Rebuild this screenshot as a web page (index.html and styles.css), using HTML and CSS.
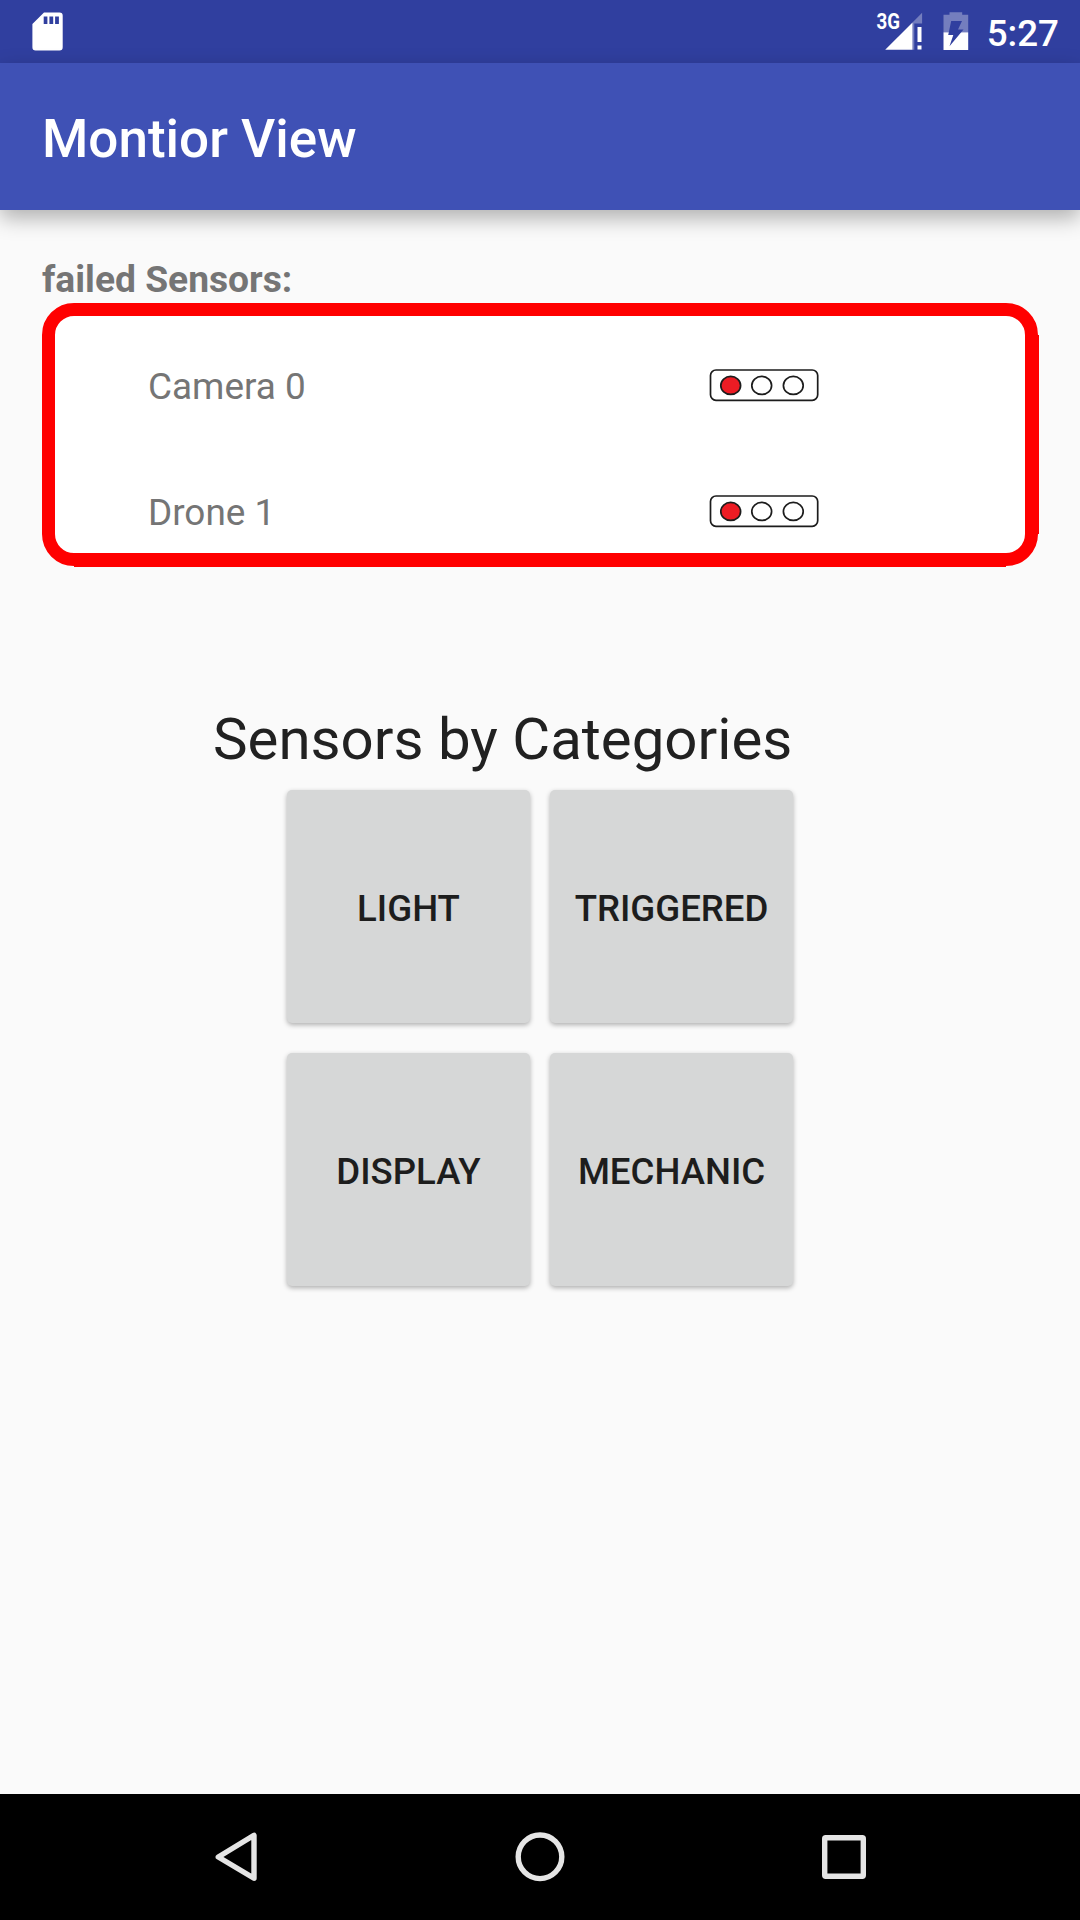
FILE: index.html
```html
<!DOCTYPE html>
<html lang="en">
<head>
<meta charset="utf-8">
<title>Montior View</title>
<link rel="stylesheet" href="styles.css">
</head>
<body>
<div class="screen">
  <div class="status-bar">
    <svg class="sd-icon" width="32" height="40" viewBox="32 12 32 40">
      <path fill="#fff" fill-rule="evenodd" d="M44 12.4H59.5Q62.7 12.4 62.7 15.6V47.3Q62.7 50.6 59.5 50.6H35.600Q32.400 50.600 32.400 47.300V24ZM43.700 16.400V24H47.400V16.400ZM49.400 16.400V24H53.200V16.400ZM55.100 16.400V24H58.900V16.400Z"/>
    </svg>
    <div class="status-right">
      <svg class="status-icons" width="96" height="63" viewBox="874.500 0 96 63">
        <text class="net-label" x="876" y="29" textLength="23.500" lengthAdjust="spacingAndGlyphs">3G</text>
        <path fill="#fff" d="M884.700 49.800L912 22.500V49.800Z"/>
        <path fill="#fff" fill-opacity=".33" d="M912 22.500L921.600 12.800V23.500H913.800V49.800H912Z"/>
        <path fill="#fff" d="M917 27H921V42H917ZM917 45.500H921V49.500H917Z"/>
        <path fill="#fff" fill-opacity=".33" d="M943 32.300V14.800H949V12.200H961.700V14.800H967.700V32.300Z"/>
        <path fill="#fff" d="M943 32.300H967.700V50H943Z"/>
        <path fill="#303f9f" d="M950.700 21H961.500L957.500 29.500H963L949 46.300L952.800 35H947.700Z"/>
      </svg>
      <span class="clock">5:27</span>
    </div>
  </div>
  <header class="app-bar">Montior View</header>
  <main class="content">
    <h2 class="failed-title">failed Sensors:</h2>
    <div class="failed-frame">
      <div class="failed-list">
        <div class="sensor-row">
          <span>Camera 0</span>
          <svg class="lamp" width="110" height="44" viewBox="0 0 110 44"><rect x="1.500" y="6" width="107.200" height="30.300" rx="5.500"/><ellipse class="on" cx="21.700" cy="21.400" rx="9.900" ry="9"/><ellipse cx="52.700" cy="21.400" rx="9.900" ry="9"/><ellipse cx="84.300" cy="21.400" rx="9.900" ry="9"/></svg>
        </div>
        <div class="sensor-row">
          <span>Drone 1</span>
          <svg class="lamp" width="110" height="44" viewBox="0 0 110 44"><rect x="1.500" y="6" width="107.200" height="30.300" rx="5.500"/><ellipse class="on" cx="21.700" cy="21.400" rx="9.900" ry="9"/><ellipse cx="52.700" cy="21.400" rx="9.900" ry="9"/><ellipse cx="84.300" cy="21.400" rx="9.900" ry="9"/></svg>
        </div>
      </div>
    </div>
    <h1 class="category-title">Sensors by Categories</h1>
    <div class="category-grid">
      <button class="category">LIGHT</button>
      <button class="category">TRIGGERED</button>
      <button class="category">DISPLAY</button>
      <button class="category">MECHANIC</button>
    </div>
  </main>
  <nav class="nav-bar">
    <svg width="56" height="56" viewBox="208 1829 56 56"><path d="M254 1835.300V1878.300L218.300 1857Z"/></svg>
    <svg width="56" height="56" viewBox="512 1829 56 56"><circle cx="540" cy="1856.800" r="21.800"/></svg>
    <svg width="56" height="56" viewBox="816 1829 56 56"><rect x="824.700" y="1837.700" width="38.600" height="38.600" rx="1"/></svg>
  </nav>
</div>
</body>
</html>
```
FILE: styles.css
```css
* {
  box-sizing: border-box;
}

body {
  margin: 0;
  font-family: Roboto, sans-serif;
}

.screen {
  display: flex;
  flex-direction: column;
  width: 1080px;
  height: 1920px;
  overflow: hidden;
  background: #fafafa;
}

.status-bar {
  display: flex;
  justify-content: space-between;
  height: 63px;
  padding: 0 21px 0 32px;
  background: #303f9f;
}

.sd-icon {
  margin-top: 12px;
}

.status-right {
  display: flex;
  gap: 16px;
}

.net-label {
  fill: #fff;
  font-size: 21.500px;
  font-weight: 700;
}

.clock {
  color: #fff;
  font-size: 36.750px;
  font-weight: 500;
  line-height: 68px;
}

.app-bar {
  height: 147px;
  padding-left: 42px;
  background: #3f51b5;
  box-shadow: 0 8px 20px rgba(0, 0, 0, .3);
  color: #fff;
  font-size: 53px;
  font-weight: 500;
  line-height: 153px;
}

.content {
  display: flex;
  flex: 1;
  flex-direction: column;
  padding: 42px 41px 0 42px;
}

.failed-title {
  margin: 0;
  padding-top: 6px;
  height: 51px;
  color: #757575;
  font-size: 37.200px;
  font-weight: 700;
  line-height: 43px;
}

/* The straight right and bottom sides are one pixel heavier than the corners. */
.failed-frame {
  height: 264px;
  padding: 0 1px 1px 0;
  background:
    linear-gradient(#f00, #f00) 100% 32px / 1px 199px no-repeat,
    linear-gradient(#f00, #f00) 32px 100% / 932px 1px no-repeat;
}

.failed-list {
  display: flex;
  flex-direction: column;
  gap: 82px;
  height: 263px;
  padding: 48px 206px 0 93px;
  border: 13px solid #f00;
  border-radius: 32px;
  background: #fff;
}

.sensor-row {
  display: flex;
  justify-content: space-between;
  height: 44px;
  color: #757575;
  font-size: 36.900px;
  line-height: 46px;
}

.lamp {
  fill: #fff;
  stroke: #1c1c1c;
  stroke-width: 1.700px;
}

.lamp .on {
  fill: #ed1c24;
}

.category-title {
  margin: 137px 0 0 171px;
  color: #212121;
  font-size: 58.200px;
  font-weight: 400;
  line-height: 70px;
}

.category-grid {
  display: grid;
  grid-template-columns: 243px 243px;
  grid-auto-rows: 233px;
  gap: 30px 20px;
  margin: 16px 0 0 245px;
}

.category {
  padding: 4px 0 0;
  border: 0;
  border-radius: 5px;
  background: #d6d7d7;
  box-shadow: 0 2px 5px rgba(0, 0, 0, .3);
  color: #1d1d1d;
  font-family: inherit;
  font-size: 36.600px;
  font-weight: 500;
}

.nav-bar {
  display: flex;
  justify-content: space-between;
  height: 126px;
  padding: 35px 208px 0;
  background: #000;
}

.nav-bar svg {
  fill: none;
  stroke: #e5e5e5;
  stroke-width: 5.400px;
  stroke-linejoin: round;
}
```
